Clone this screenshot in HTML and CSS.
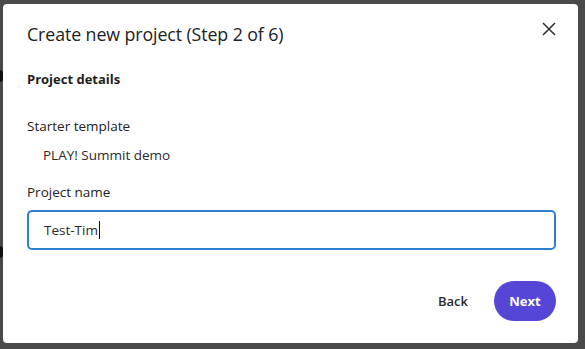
FILE: index.html
```html
<!DOCTYPE html>
<html>
<head>
<meta charset="utf-8">
<link rel="stylesheet" href="styles.css">
</head>
<body>
<div class="backdrop">
  <span class="dot dot-a"></span>
  <span class="dot dot-b"></span>
  <div class="dialog">
    <div class="header">
      <h1 class="title">Create new project (Step 2 of 6)</h1>
      <button class="close" aria-label="Close">
        <svg width="14" height="14" viewBox="0 0 14 14"><path d="M1 1L13 13M13 1L1 13" stroke="#333" stroke-width="1.6" fill="none"/></svg>
      </button>
    </div>
    <div class="section-title">Project details</div>
    <div class="field-label first">Starter template</div>
    <div class="field-value">PLAY! Summit demo</div>
    <div class="field-label">Project name</div>
    <div class="input"><span class="input-text">Test-Tim</span><span class="caret"></span></div>
    <div class="footer">
      <button class="btn-back">Back</button>
      <button class="btn-next">Next</button>
    </div>
  </div>
</div>
</body>
</html>
```
FILE: styles.css
```css
html, body {
  margin: 0;
  padding: 0;
  width: 585px;
  height: 349px;
  overflow: hidden;
  background: #4a4a4a;
  font-family: "Open Sans", "Noto Sans", sans-serif;
}
.backdrop {
  position: relative;
  width: 585px;
  height: 349px;
  padding: 4px 7px 6px 3px;
  box-sizing: border-box;
}
.dot {
  position: absolute;
  width: 8px;
  height: 12px;
  border-radius: 50%;
  background: #111;
  left: -4px;
}
.dot-a { top: 70px; }
.dot-b { top: 246px; }
.dialog {
  position: relative;
  background: #fff;
  border-radius: 4px;
  height: 339px;
  box-sizing: border-box;
  padding: 0 22px 0 24px;
  display: flex;
  flex-direction: column;
}
.header {
  display: flex;
  align-items: center;
  justify-content: space-between;
  height: 60px;
}
.title {
  margin: 0;
  font-size: 17.8px;
  font-weight: 400;
  color: #222;
  letter-spacing: -0.1px;
}
.close {
  border: 0;
  background: none;
  padding: 0;
  margin-right: 0;
  margin-top: -10px;
  display: flex;
}
.section-title {
  font-size: 13px;
  font-weight: 700;
  color: #1e1e1e;
  margin-top: 6px;
  line-height: 18px;
}
.field-label {
  font-size: 13.5px;
  color: #222;
  line-height: 18px;
  margin-top: 19px;
}
.field-label.first { margin-top: 29px; }
.field-value {
  font-size: 13.5px;
  color: #2a2a2a;
  line-height: 18px;
  margin-top: 11px;
  padding-left: 16px;
}
.input {
  margin-top: 9px;
  height: 40px;
  border: 2px solid #2f7fd1;
  border-radius: 5px;
  box-sizing: border-box;
  display: flex;
  align-items: center;
  padding-left: 15px;
  font-size: 13.5px;
  color: #2a2a2a;
}
.caret {
  display: inline-block;
  width: 1px;
  height: 18px;
  background: #111;
  margin-left: 1px;
}
.footer {
  display: flex;
  justify-content: flex-end;
  align-items: center;
  gap: 26px;
  margin-top: 31px;
}
.btn-back {
  border: 0;
  background: none;
  font-family: inherit;
  font-size: 13px;
  font-weight: 600;
  color: #2a2a2a;
  padding: 0;
}
.btn-next {
  border: 0;
  background: #5546d8;
  color: #fff;
  font-family: inherit;
  font-size: 13px;
  font-weight: 700;
  height: 40px;
  width: 62px;
  border-radius: 20px;
  padding: 0;
}
```
